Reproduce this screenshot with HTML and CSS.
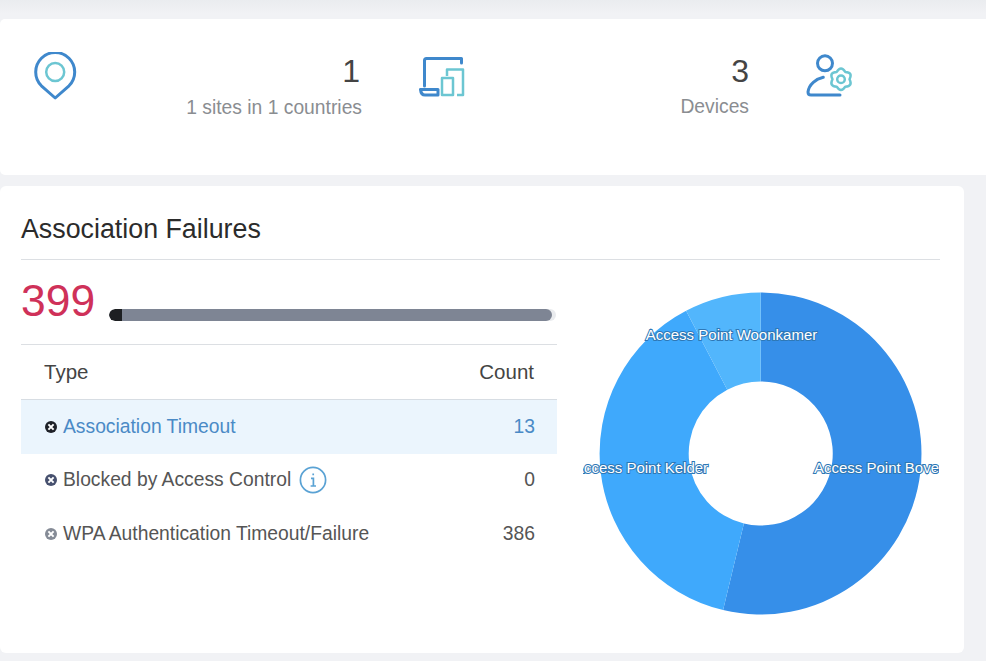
FILE: index.html
```html
<!DOCTYPE html>
<html lang="en">
<head>
    <meta charset="UTF-8">
    <meta name="viewport" content="width=device-width, initial-scale=1.0">
    <title>Association Failures</title>
    <link rel="stylesheet" href="styles.css">
</head>
<body>
    <section class="stats">
        <div class="stat">
            <svg class="stat-icon" width="48" height="50" viewBox="0 0 48 50" fill="none">
                <path class="line-blue" d="M7.4 33.8A19.5 19.5 0 1 1 35 33.8L21.2 46Z"/>
                <circle class="line-teal" cx="21.2" cy="20" r="9"/>
            </svg>
            <div class="stat-text">
                <div class="stat-value">1</div>
                <div class="stat-label">1 sites in 1 countries</div>
            </div>
        </div>
        <div class="stat stat-raised">
            <svg class="stat-icon" width="48" height="50" viewBox="0 0 48 50" fill="none">
                <path class="line-blue" d="M5.5 34V8.5Q5.5 6.5 7.5 6.5H42.5V11"/>
                <path class="line-blue" d="M1.5 37.5H19V43H6Q2 43 1.5 37.5Z"/>
                <path class="line-teal" d="M28 24V17.5H44V43H38"/>
                <rect class="line-teal" x="23" y="26" width="11" height="17"/>
            </svg>
            <div class="stat-text">
                <div class="stat-value">3</div>
                <div class="stat-label">Devices</div>
            </div>
        </div>
        <div class="stat">
            <svg class="stat-icon" width="48" height="50" viewBox="0 0 48 50" fill="none">
                <circle class="line-blue" cx="19" cy="11.3" r="7.5"/>
                <path class="line-blue" d="M17.3 25.3C10 27 3 32 2 40Q2 43 5 43H34"/>
                <path class="line-teal" transform="translate(35 27.3)" d="M4.25-7.36Q0-14-4.25-7.36Q-12.1-7-8.5 0Q-12.1 7-4.25 7.36Q0 14 4.25 7.36Q12.1 7 8.5 0Q12.1-7 4.25-7.36Z"/>
                <circle class="line-teal" cx="35" cy="27.3" r="3.8"/>
            </svg>
        </div>
    </section>

    <section class="card">
        <h2 class="card-title">Association Failures</h2>
        <div class="card-body">
            <div class="failures">
                <div class="summary">
                    <span class="total">399</span>
                    <div class="bar"><div class="bar-fill"></div></div>
                </div>
                <table class="types">
                    <thead>
                        <tr><th>Type</th><th class="num">Count</th></tr>
                    </thead>
                    <tbody>
                        <tr class="selected">
                            <td>
                                <div class="type">
                                    <svg class="x-icon x-black" width="12" height="12" viewBox="0 0 12 12"><circle cx="6" cy="6" r="6"/><path d="M3.4 3.4L8.6 8.6M8.6 3.4L3.4 8.6"/></svg>
                                    Association Timeout
                                </div>
                            </td>
                            <td class="num">13</td>
                        </tr>
                        <tr>
                            <td>
                                <div class="type">
                                    <svg class="x-icon x-navy" width="12" height="12" viewBox="0 0 12 12"><circle cx="6" cy="6" r="6"/><path d="M3.4 3.4L8.6 8.6M8.6 3.4L3.4 8.6"/></svg>
                                    Blocked by Access Control
                                    <svg class="info-icon" width="28" height="28" viewBox="0 0 28 28" fill="none"><circle cx="14" cy="14" r="12.6"/><path d="M14.2 7.4V9.2M12 12.4H14.4V19.8M11.6 20H17"/></svg>
                                </div>
                            </td>
                            <td class="num">0</td>
                        </tr>
                        <tr>
                            <td>
                                <div class="type">
                                    <svg class="x-icon x-grey" width="12" height="12" viewBox="0 0 12 12"><circle cx="6" cy="6" r="6"/><path d="M3.4 3.4L8.6 8.6M8.6 3.4L3.4 8.6"/></svg>
                                    WPA Authentication Timeout/Failure
                                </div>
                            </td>
                            <td class="num">386</td>
                        </tr>
                    </tbody>
                </table>
            </div>
            <svg class="donut" width="356" height="335" viewBox="583 285 356 335">
                <path fill="#368fe9" d="M760.7 292.5A161 161 0 1 1 723.1 610.1L743.9 523.5A72 72 0 1 0 760.7 381.5Z"/>
                <path fill="#3fa9fc" d="M723.1 610.1A161 161 0 0 1 686.1 310.8L727.3 389.7A72 72 0 0 0 743.9 523.5Z"/>
                <path fill="#52b6fc" d="M686.1 310.8A161 161 0 0 1 760.7 292.5V381.5A72 72 0 0 0 727.3 389.7Z"/>
                <text class="slice-label" x="731.5" y="340">Access Point Woonkamer</text>
                <text class="slice-label" x="641" y="473">Access Point Kelder</text>
                <text class="slice-label" x="876.5" y="473">Access Point Bove</text>
            </svg>
        </div>
    </section>
</body>
</html>
```

FILE: styles.css
```css
body {
    margin: 0;
    padding-top: 19px;
    height: 642px;
    overflow: hidden;
    background: linear-gradient(#eaecef, #f1f2f5 14px);
    font-family: "Liberation Sans", Arial, sans-serif;
    font-size: 19.3px;
    color: #555;
}
.stats {
    display: grid;
    grid-template-columns: 385px 387px auto;
    box-sizing: border-box;
    height: 156px;
    padding: 33px 0 0 34px;
    background: white;
    border-radius: 5px 0 0 5px;
}
.stat {
    display: flex;
    align-items: flex-start;
    padding-right: 57px;
}
.stat-icon {
    flex: none;
}
.stat-text {
    margin-left: auto;
    text-align: right;
}
.stat-value {
    font-size: 32px;
    line-height: 38px;
    color: #444;
    padding-right: 2px;
}
.stat-raised .stat-value {
    padding-right: 0;
}
.stat-label {
    font-size: 19.3px;
    line-height: 36px;
    color: #8a8d91;
}
.stat-raised .stat-label {
    line-height: 34px;
}
.line-blue {
    stroke: #3f88cc;
    stroke-width: 3;
    stroke-linejoin: round;
    stroke-linecap: round;
}
.line-teal {
    stroke: #6cc6d2;
    stroke-width: 2.5;
    stroke-linejoin: round;
}
.card {
    box-sizing: border-box;
    width: 964px;
    height: 467px;
    margin-top: 11px;
    padding: 0 24px 0 21px;
    background: white;
    border-radius: 6px;
}
.card-title {
    box-sizing: border-box;
    height: 74px;
    margin: 0;
    padding-top: 26px;
    border-bottom: 1px solid #dcdfe3;
    font-size: 26.8px;
    line-height: 34px;
    font-weight: normal;
    color: #2b2b2b;
}
.card-body {
    display: grid;
    grid-template-columns: 536px 356px;
    column-gap: 26px;
}
.summary {
    display: flex;
    align-items: center;
    box-sizing: border-box;
    height: 85px;
    border-bottom: 1px solid #dcdfe3;
}
.total {
    width: 88px;
    font-size: 44.4px;
    line-height: 50px;
    color: #cf3159;
    margin-top: -3px;
}
.bar {
    width: 447px;
    height: 12px;
    margin-top: 25px;
    background: #e9ebee;
    border-radius: 6px;
    overflow: hidden;
}
.bar-fill {
    width: 443px;
    height: 12px;
    background: linear-gradient(90deg, #1d1f22 13px, #7e8594 13px);
    border-radius: 6px;
}
.types {
    width: 100%;
    border-collapse: collapse;
}
.types th {
    height: 54px;
    padding: 0 23px;
    border-bottom: 1px solid #d7dde3;
    font-size: 20.5px;
    font-weight: normal;
    text-align: left;
    color: #444;
}
.types td {
    height: 53.5px;
    padding: 0 22px 0 24px;
}
.types .num {
    text-align: right;
}
.selected {
    background: #ebf5fd;
    color: #4a8ac6;
}
.type {
    display: flex;
    align-items: center;
    gap: 6px;
    white-space: nowrap;
}
.x-icon path {
    stroke: white;
    stroke-width: 2;
}
.x-black { fill: #1e2128; }
.x-navy { fill: #46506e; }
.x-grey { fill: #858b96; }
.info-icon {
    margin-left: 2px;
    stroke: #5aa2d4;
    stroke-width: 1.7;
}
.donut {
    margin-top: 25px;
}
.slice-label {
    font-size: 15px;
    text-anchor: middle;
    fill: white;
    stroke: #2e78b6;
    stroke-width: 2;
    paint-order: stroke;
}
```
